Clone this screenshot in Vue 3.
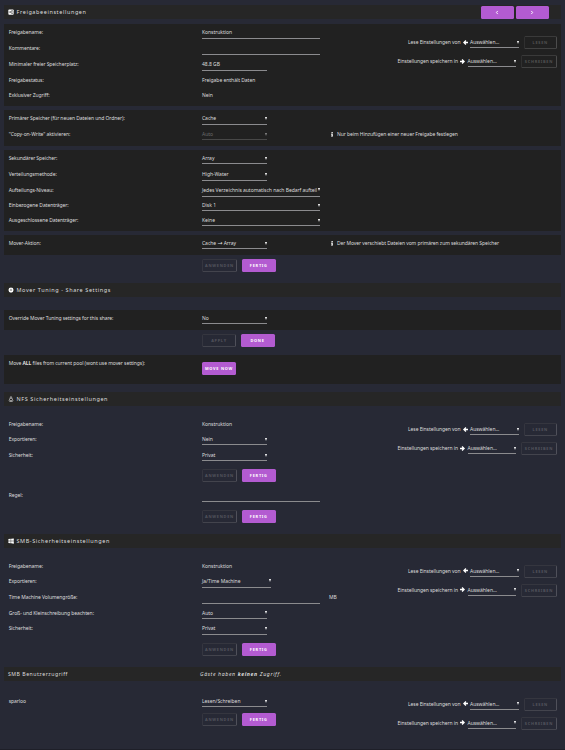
<script setup>
import { h } from 'vue'

const anwenden = ['Anwenden', 'Fertig']

const general = [
  { label: 'Freigabename:', value: 'Konstruktion', kind: 'input wide', size: 'r16' },
  { label: 'Kommentare:', value: '', kind: 'input wide', size: 'r16' },
  { label: 'Minimaler freier Speicherplatz:', value: '48.8 GB', kind: 'input', size: 'r16' },
  { label: 'Freigabestatus:', value: 'Freigabe enthält Daten', kind: 'plain', size: 'r15' },
  { label: 'Exklusiver Zugriff:', value: 'Nein', kind: 'plain', size: 'r15' },
]
const primary = [
  { label: 'Primärer Speicher (für neuen Dateien und Ordner):', value: 'Cache', kind: 'select', size: 'r16' },
  { label: '"Copy-on-Write" aktivieren:', value: 'Auto', kind: 'select off short', size: 'r16', hint: 'Nur beim Hinzufügen einer neuer Freigabe festlegen' },
]
const secondary = [
  { label: 'Sekundärer Speicher:', value: 'Array', kind: 'select short', size: 'r16' },
  { label: 'Verteilungsmethode:', value: 'High-Water', kind: 'select', size: 'r155' },
  { label: 'Aufteilungs-Niveau:', value: 'Jedes Verzeichnis automatisch nach Bedarf aufteil', kind: 'select wide', size: 'r155' },
  { label: 'Einbezogene Datenträger:', value: 'Disk 1', kind: 'select wide short', size: 'r15' },
  { label: 'Ausgeschlossene Datenträger:', value: 'Keine', kind: 'select wide short', size: 'r15' },
]
const mover = [
  { label: 'Mover-Aktion:', value: 'Cache → Array', kind: 'select short', size: 'r16', hint: 'Der Mover verschiebt Dateien vom primären zum sekundären Speicher' },
]
const tuning = [
  { label: 'Override Mover Tuning settings for this share:', value: 'No', kind: 'select short', size: 'r16' },
]
const nfs = [
  { label: 'Freigabename:', value: 'Konstruktion', kind: 'plain', size: 'r15' },
  { label: 'Exportieren:', value: 'Nein', kind: 'select short', size: 'r16' },
  { label: 'Sicherheit:', value: 'Privat', kind: 'select short', size: 'r16' },
]
const rule = [{ label: 'Regel:', value: '', kind: 'input wide', size: 'r16' }]
const smb = [
  { label: 'Freigabename:', value: 'Konstruktion', kind: 'plain', size: 'r15' },
  { label: 'Exportieren:', value: 'Ja/Time Machine', kind: 'select medium', size: 'r16' },
  { label: 'Time Machine Volumengröße:', value: '', kind: 'input wide', size: 'r16', unit: 'MB' },
  { label: 'Groß- und Kleinschreibung beachten:', value: 'Auto', kind: 'select short', size: 'r155' },
  { label: 'Sicherheit:', value: 'Privat', kind: 'select', size: 'r16' },
]
const users = [{ label: 'sparloo', value: 'Lesen/Schreiben', kind: 'select short', size: 'r16' }]

const withArrows = (value) =>
  value.split(/(→)/).map((part) => (part === '→' ? h('span', { class: 'glyph' }, part) : part))

const Rows = ({ items }) =>
  h('div', { class: 'rows' }, items.map((r) =>
    h('div', { class: ['row', r.size] }, [
      h('span', { class: 'label' }, r.label),
      h('span', { class: ['field', r.kind] }, [h('span', { class: 'text' }, withArrows(r.value))]),
      r.hint
        ? h('span', { class: 'hint' }, [
            h('svg', { class: 'info', viewBox: '0 0 5 9' }, [
              h('path', { d: 'M1 0h2.500v2.300H1zM0 3.300h3.500v4h1.300V9H0V7.300h1.200V5H0z' }),
            ]),
            r.hint,
          ])
        : null,
      r.unit ? h('span', { class: 'unit' }, r.unit) : null,
    ])
  ))
Rows.props = ['items']

const Buttons = ({ names }) =>
  h('div', { class: 'buttons' }, [
    h('button', { class: 'btn ghost', disabled: true }, names[0]),
    h('button', { class: 'btn solid' }, names[1]),
  ])
Buttons.props = ['names']

const arrow = (d) => h('svg', { class: 'arrow', viewBox: '0 0 10 10' }, [h('path', { d })])

const CopyBlock = () =>
  h('div', { class: 'copy' }, [
    h('div', { class: 'copyrow' }, [
      h('span', { class: 'caption' }, 'Lese Einstellungen von'),
      arrow('M5 0 0 5l5 5 1.800-1.800L5.200 6.600H10V3.400H5.200l1.600-1.600z'),
      h('span', { class: 'field select pick' }, [h('span', { class: 'text' }, 'Auswählen...')]),
      h('button', { class: 'btn ghost read', disabled: true }, 'Lesen'),
    ]),
    h('div', { class: 'copyrow second' }, [
      h('span', { class: 'caption' }, 'Einstellungen speichern in'),
      arrow('M5 0l5 5-5 5-1.800-1.800 1.600-1.600H0V3.400h4.800L3.200 1.800z'),
      h('span', { class: 'field select pick' }, [h('span', { class: 'text' }, 'Auswählen...')]),
      h('button', { class: 'btn ghost write', disabled: true }, 'Schreiben'),
    ]),
  ])
</script>

<template>
  <main class="page">
    <header class="title first">
      <svg class="icon" viewBox="0 0 16 16"><path class="fill" d="M3 1h10a2 2 0 0 1 2 2v10a2 2 0 0 1-2 2H3a2 2 0 0 1-2-2V3a2 2 0 0 1 2-2z" /><path class="cut" d="M11 5 5 8l6 3" /><g class="dots"><circle cx="11" cy="5" r="1.500" /><circle cx="5" cy="8" r="1.500" /><circle cx="11" cy="11" r="1.500" /></g></svg>
      <span>Freigabeeinstellungen</span>
      <nav class="pager">
        <button class="btn solid page-btn"><svg class="chev" viewBox="0 0 6 8"><path d="M4.200 1.500 2 4l2.200 2.500" /></svg></button>
        <button class="btn solid page-btn"><svg class="chev" viewBox="0 0 6 8"><path d="M1.800 1.500 4 4 1.800 6.500" /></svg></button>
      </nav>
    </header>
    <section class="panel dark p-general"><Rows :items="general" /><CopyBlock /></section>
    <section class="panel dark p-primary"><Rows :items="primary" /></section>
    <section class="panel dark p-secondary"><Rows :items="secondary" /></section>
    <section class="panel dark p-mover"><Rows :items="mover" /></section>
    <Buttons :names="anwenden" class="b-mover" />

    <header class="title">
      <svg class="icon" viewBox="0 0 16 16"><path class="gear" fill-rule="evenodd" d="M6.500 1h3l.500 2 1.800-1 2.100 2.100-1 1.800 2.100.600v3l-2.100.600 1 1.800-2.100 2.100-1.800-1-.500 2h-3L6 13l-1.800 1-2.100-2.100 1-1.800L1 9.500v-3l2.100-.600-1-1.800L4.200 2 6 3zM8 6.200a1.800 1.800 0 1 0 0 3.600 1.800 1.800 0 0 0 0-3.600z" /></svg>
      <span>Mover Tuning - Share Settings</span>
    </header>
    <section class="panel dark p-tuning"><Rows :items="tuning" /></section>
    <Buttons :names="['Apply', 'Done']" class="b-tuning" />
    <section class="panel dark p-move">
      <div class="row">
        <span class="label">Move <b>ALL</b> files from current pool (wont use mover settings):</span>
        <button class="btn solid move">Move now</button>
      </div>
    </section>

    <header class="title">
      <svg class="icon" viewBox="0 0 16 16"><path class="tux" d="M6 5c-.500-5 4.500-5 4 0 0 2 3 4 3 7l-2 3H5l-2-3c0-3 3-5 3-7zM6 6l2 1 2-1M5 14l1-2h4l1 2" /></svg>
      <span>NFS Sicherheitseinstellungen</span>
    </header>
    <section class="panel p-nfs"><Rows :items="nfs" /><CopyBlock class="tight" /></section>
    <Buttons :names="anwenden" class="b-nfs" />
    <section class="panel p-rule"><Rows :items="rule" /></section>
    <Buttons :names="anwenden" class="b-rule" />

    <header class="title">
      <svg class="icon" viewBox="0 0 16 16"><path class="fill" d="M1 2.800 7.300 2v5.500H1zM8.300 1.900 15.500 1v6.500H8.300zM1 8.500h6.300V14L1 13.200zM8.300 8.500h7.200V15l-7.200-.900z" /></svg>
      <span>SMB-Sicherheitseinstellungen</span>
    </header>
    <section class="panel p-smb"><Rows :items="smb" /><CopyBlock class="tight" /></section>
    <Buttons :names="anwenden" class="b-smb" />

    <header class="title access">
      <span class="sub">SMB Benutzerzugriff</span>
      <em>Gäste haben <b>keinen</b> Zugriff.</em>
    </header>
    <section class="panel p-users">
      <div class="stack"><Rows :items="users" /><Buttons :names="anwenden" class="b-users" /></div>
      <CopyBlock class="tighter" />
    </section>
  </main>
</template>

<style>
body {
  background: #272935;
}
</style>

<style scoped>
.page {
  box-sizing: border-box;
  height: 750px;
  padding: 5px 4px 0;
  overflow: hidden;
  display: flex;
  flex-direction: column;
  border-bottom: 1px solid #1e1f28;
  background: #272935;
  color: #dedede;
  font-family: "Noto Sans", sans-serif;
  font-size: 5px;
  letter-spacing: -0.070px;
  line-height: 16px;
  white-space: nowrap;
}
.page > * {
  flex: none;
}
.title {
  display: flex;
  align-items: center;
  height: 14px;
  padding-left: 3.500px;
  background: #262626;
  font-size: 5.500px;
  letter-spacing: 0.590px;
  line-height: 14px;
}
.icon {
  width: 6px;
  height: 6px;
  margin-right: 3px;
}
.fill,
.gear {
  fill: #fff;
}
.cut {
  fill: none;
  stroke: #262626;
  stroke-width: 1.300;
}
.dots {
  fill: #262626;
}
.tux {
  fill: none;
  stroke: #e8e8e8;
  stroke-width: 1.600;
}
.pager {
  display: flex;
  gap: 1.500px;
  margin-left: auto;
  margin-right: 12px;
}
.page .pager .page-btn {
  width: 33.500px;
}
.chev {
  width: 4px;
  height: 5px;
}
.chev path {
  fill: none;
  stroke: #fff;
  stroke-width: 1.500;
}
.panel {
  display: grid;
}
.panel > * {
  grid-area: 1 / 1;
}
.dark {
  background: #212121;
}
.p-general {
  height: 82px;
  margin-top: 5px;
}
.p-primary {
  height: 36px;
  margin-top: 4px;
}
.p-secondary {
  height: 81px;
  margin-top: 4px;
}
.p-mover {
  height: 20px;
  margin-top: 4px;
}
.b-mover {
  margin: 4px 0 11px;
}
.p-tuning {
  height: 20px;
  margin-top: 13px;
}
.b-tuning {
  margin: 4px 0 8px;
}
.p-move {
  height: 29px;
  margin-bottom: 8px;
}
.p-nfs {
  height: 53px;
  margin-top: 10px;
}
.b-nfs {
  margin-bottom: 5px;
}
.p-rule {
  height: 23px;
}
.b-rule {
  margin-bottom: 11px;
}
.p-smb {
  height: 85px;
  margin-top: 9.500px;
}
.b-smb {
  margin-bottom: 11px;
}
.p-users {
  height: 60px;
  margin-top: 12.500px;
}
.page :deep(.rows) {
  display: flex;
  flex-direction: column;
}
.page :deep(.row) {
  display: flex;
  align-items: flex-start;
  padding-left: 4.700px;
}
.page :deep(.r16) {
  height: 16px;
}
.page :deep(.r155) {
  height: 15.500px;
}
.page :deep(.r15) {
  height: 15px;
}
.page :deep(.label) {
  width: 193.300px;
}
.page :deep(.field) {
  box-sizing: border-box;
  display: flex;
  justify-content: space-between;
  align-items: flex-start;
  width: 65px;
  height: 15px;
  border-bottom: 1px solid #8b8b8e;
  letter-spacing: -0.030px;
  line-height: 17px;
}
.page :deep(.short) {
  height: 14px;
}
.page :deep(.wide) {
  width: 118px;
}
.page :deep(.medium) {
  width: 69px;
}
.page :deep(.plain) {
  border-color: transparent;
  line-height: 16px;
}
.page :deep(.glyph) {
  font-family: "DejaVu Sans", sans-serif;
  font-size: 6px;
  line-height: 1;
}
.page :deep(.select)::after {
  content: "";
  flex: none;
  width: 0;
  margin-top: 6.700px;
  border: 1.500px solid transparent;
  border-width: 3px 1.500px 0;
  border-top-color: #fff;
}
.page :deep(.off) {
  color: #6c6c6c;
  border-color: #484848;
}
.page :deep(.off)::after {
  border-top-color: #888;
}
.page :deep(.hint) {
  margin-left: 64px;
}
.page :deep(.info) {
  width: 2.500px;
  height: 4.500px;
  margin-right: 3.500px;
  vertical-align: -0.500px;
  fill: #fff;
}
.page :deep(.unit) {
  margin-left: 9px;
}
.page :deep(.buttons) {
  display: flex;
  gap: 4.500px;
  padding-left: 198px;
}
.page :deep(.btn) {
  box-sizing: border-box;
  display: flex;
  align-items: center;
  justify-content: center;
  height: 13px;
  width: 34.500px;
  padding: 0;
  border: 1px solid transparent;
  border-radius: 1.500px;
  font: bold 3.900px "Noto Sans", sans-serif;
  letter-spacing: 0.720px;
  text-transform: uppercase;
  white-space: nowrap;
}
.page :deep(.ghost) {
  width: 35px;
  background: transparent;
  border-color: #35363f #4f505a #43444d #353640;
  color: #54555e;
}
.page :deep(.solid) {
  background: #b35bd1;
  border: 0;
  color: #fff;
}
.dark :deep(.ghost) {
  border-color: #3a3a3a #4c4c4c #424242 #303030;
  color: #525252;
}
.page :deep(.b-tuning .btn),
.page .b-tuning :deep(.btn) {
  width: 34px;
}
.page .move {
  width: 34px;
  margin-top: 7px;
}
.page :deep(.b-users) {
  margin-top: 4px;
}
.page :deep(.copy) {
  justify-self: end;
  padding: 12px 4px 0 0;
}
.page :deep(.tight) {
  padding-top: 7px;
}
.page :deep(.tighter) {
  padding-top: 4.500px;
}
.page :deep(.copyrow) {
  display: flex;
  justify-content: flex-end;
  align-items: flex-start;
  height: 19px;
  line-height: 12px;
}
.page :deep(.caption) {
  letter-spacing: -0.060px;
}
.page :deep(.arrow) {
  width: 5px;
  height: 5px;
  margin: 3.500px 2.200px 0 2.300px;
  fill: #fff;
}
.page :deep(.copyrow .pick) {
  width: 48.500px;
  height: 12px;
  line-height: 12px;
}
.page :deep(.copyrow .pick)::after {
  margin-top: 4.500px;
}
.page :deep(.second .pick) {
  line-height: 13.500px;
}
.page :deep(.copyrow .read) {
  width: 33.500px;
  margin-left: 5px;
}
.page :deep(.copyrow .write) {
  width: 36px;
  margin-left: 5px;
}
.access {
  padding-left: 4px;
  font-size: 5.200px;
  letter-spacing: 0.500px;
}
.sub {
  width: 192px;
}
.access em {
  letter-spacing: 0.620px;
}
</style>
